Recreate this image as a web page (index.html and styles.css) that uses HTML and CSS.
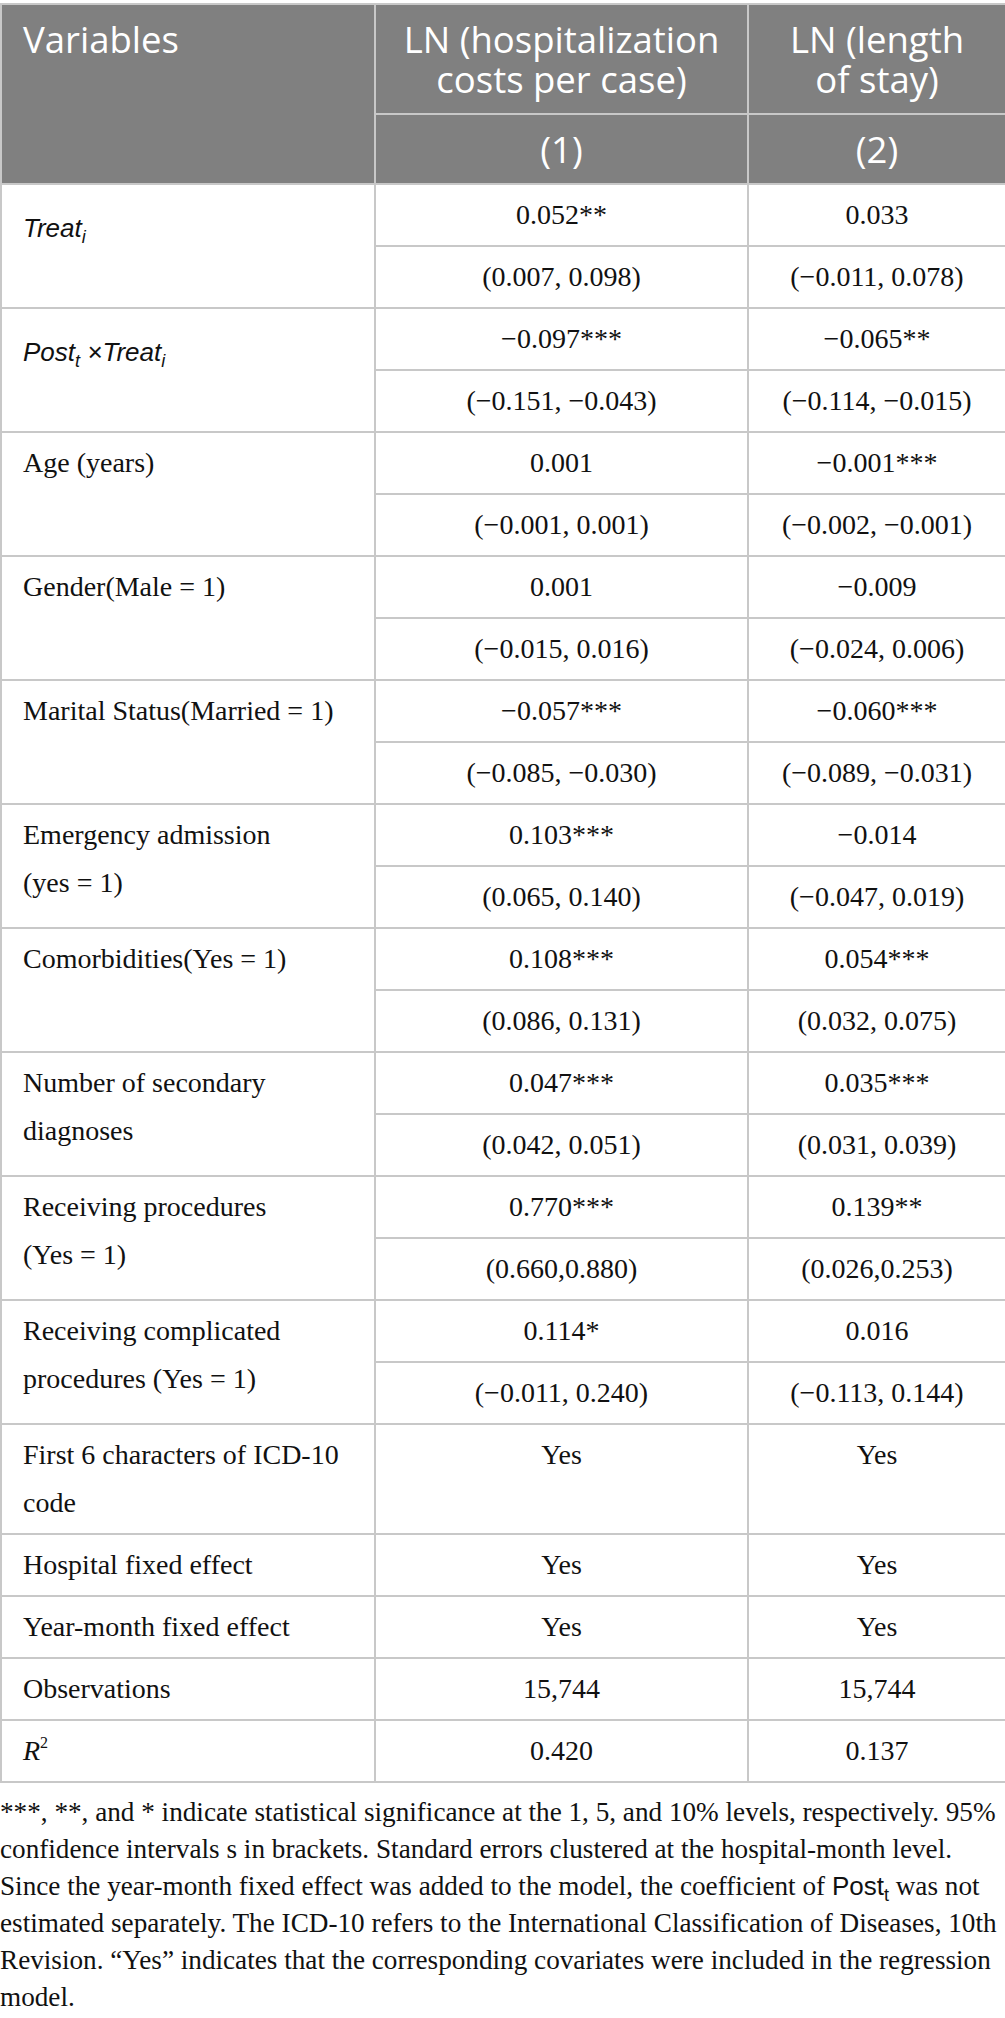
FILE: index.html
```html
<!DOCTYPE html>
<html lang="en">
<head>
<meta charset="utf-8">
<title>Regression results</title>
<link rel="stylesheet" href="styles.css">
</head>
<body>
<table class="results">
  <colgroup>
    <col class="c-var">
    <col class="c-m1">
    <col class="c-m2">
  </colgroup>
  <thead>
    <tr>
      <th rowspan="2" class="h-var">Variables</th>
      <th>LN (hospitalization costs per case)</th>
      <th>LN (length of&nbsp;stay)</th>
    </tr>
    <tr>
      <th>(1)</th>
      <th>(2)</th>
    </tr>
  </thead>
  <tbody>
    <tr>
      <td rowspan="2" class="var math"><span class="mi">Treat<sub>i</sub></span></td>
      <td>0.052**</td>
      <td>0.033</td>
    </tr>
    <tr>
      <td>(0.007, 0.098)</td>
      <td>(−0.011, 0.078)</td>
    </tr>
    <tr>
      <td rowspan="2" class="var math"><span class="mi">Post<sub>t</sub> ×Treat<sub>i</sub></span></td>
      <td>−0.097***</td>
      <td>−0.065**</td>
    </tr>
    <tr>
      <td>(−0.151, −0.043)</td>
      <td>(−0.114, −0.015)</td>
    </tr>
    <tr>
      <td rowspan="2" class="var">Age (years)</td>
      <td>0.001</td>
      <td>−0.001***</td>
    </tr>
    <tr>
      <td>(−0.001, 0.001)</td>
      <td>(−0.002, −0.001)</td>
    </tr>
    <tr>
      <td rowspan="2" class="var">Gender(Male = 1)</td>
      <td>0.001</td>
      <td>−0.009</td>
    </tr>
    <tr>
      <td>(−0.015, 0.016)</td>
      <td>(−0.024, 0.006)</td>
    </tr>
    <tr>
      <td rowspan="2" class="var">Marital Status(Married = 1)</td>
      <td>−0.057***</td>
      <td>−0.060***</td>
    </tr>
    <tr>
      <td>(−0.085, −0.030)</td>
      <td>(−0.089, −0.031)</td>
    </tr>
    <tr>
      <td rowspan="2" class="var">Emergency admission (yes&nbsp;=&nbsp;1)</td>
      <td>0.103***</td>
      <td>−0.014</td>
    </tr>
    <tr>
      <td>(0.065, 0.140)</td>
      <td>(−0.047, 0.019)</td>
    </tr>
    <tr>
      <td rowspan="2" class="var">Comorbidities(Yes = 1)</td>
      <td>0.108***</td>
      <td>0.054***</td>
    </tr>
    <tr>
      <td>(0.086, 0.131)</td>
      <td>(0.032, 0.075)</td>
    </tr>
    <tr>
      <td rowspan="2" class="var">Number of secondary diagnoses</td>
      <td>0.047***</td>
      <td>0.035***</td>
    </tr>
    <tr>
      <td>(0.042, 0.051)</td>
      <td>(0.031, 0.039)</td>
    </tr>
    <tr>
      <td rowspan="2" class="var">Receiving procedures (Yes&nbsp;=&nbsp;1)</td>
      <td>0.770***</td>
      <td>0.139**</td>
    </tr>
    <tr>
      <td>(0.660,0.880)</td>
      <td>(0.026,0.253)</td>
    </tr>
    <tr>
      <td rowspan="2" class="var">Receiving complicated procedures (Yes = 1)</td>
      <td>0.114*</td>
      <td>0.016</td>
    </tr>
    <tr>
      <td>(−0.011, 0.240)</td>
      <td>(−0.113, 0.144)</td>
    </tr>
    <tr>
      <td class="var">First 6 characters of ICD-10 code</td>
      <td>Yes</td>
      <td>Yes</td>
    </tr>
    <tr>
      <td class="var">Hospital fixed effect</td>
      <td>Yes</td>
      <td>Yes</td>
    </tr>
    <tr>
      <td class="var">Year-month fixed effect</td>
      <td>Yes</td>
      <td>Yes</td>
    </tr>
    <tr>
      <td class="var">Observations</td>
      <td>15,744</td>
      <td>15,744</td>
    </tr>
    <tr>
      <td class="var"><i>R</i><sup>2</sup></td>
      <td>0.420</td>
      <td>0.137</td>
    </tr>
  </tbody>
</table>
<p class="note">***, **, and * indicate statistical significance at the 1, 5, and 10% levels, respectively. 95% confidence intervals s in brackets. Standard errors clustered at the hospital-month level. Since the year-month fixed effect was added to the model, the coefficient of <span class="post">Post<sub>t</sub></span> was not estimated separately. The ICD-10 refers to the International Classification of Diseases, 10th Revision. “Yes” indicates that the corresponding covariates were included in the regression model.</p>
</body>
</html>
```

FILE: styles.css
```css
html, body {
  margin: 0;
  padding: 0;
  background: #ffffff;
}

body {
  width: 1005px;
  font-family: "Liberation Serif", "Times New Roman", serif;
  color: #111111;
}

.results {
  border-collapse: collapse;
  table-layout: fixed;
  width: 1005px;
  margin-top: 3px;
}

.c-var { width: 374px; }
.c-m1 { width: 373px; }
.c-m2 { width: 258px; }

.results th,
.results td {
  border: 2px solid #c8c8c8;
}

.results th {
  background: #808080;
  color: #ffffff;
  font-family: "Open Sans", "Liberation Sans", sans-serif;
  font-weight: 400;
  font-size: 36.5px;
  line-height: 40px;
  padding: 14px 21px;
  text-align: center;
  vertical-align: top;
}

.results th.h-var {
  text-align: left;
}

.results td {
  font-size: 28px;
  line-height: 48px;
  padding: 6px 21px;
  text-align: center;
  vertical-align: top;
}

.results td.var {
  text-align: left;
}

.results td.math {
  padding-top: 19px;
}

.mi {
  font-family: "Liberation Sans", Arial, sans-serif;
  font-style: italic;
  font-size: 26px;
}

.mi sub,
.post sub {
  font-size: 18px;
  line-height: 0;
  vertical-align: -6px;
}

sup {
  font-size: 16px;
  line-height: 0;
  vertical-align: 12px;
}

.note {
  margin: 11px 0 0;
  font-size: 27.2px;
  line-height: 37px;
}

.post {
  font-family: "Liberation Sans", Arial, sans-serif;
  font-size: 26px;
  line-height: 0;
}
```
